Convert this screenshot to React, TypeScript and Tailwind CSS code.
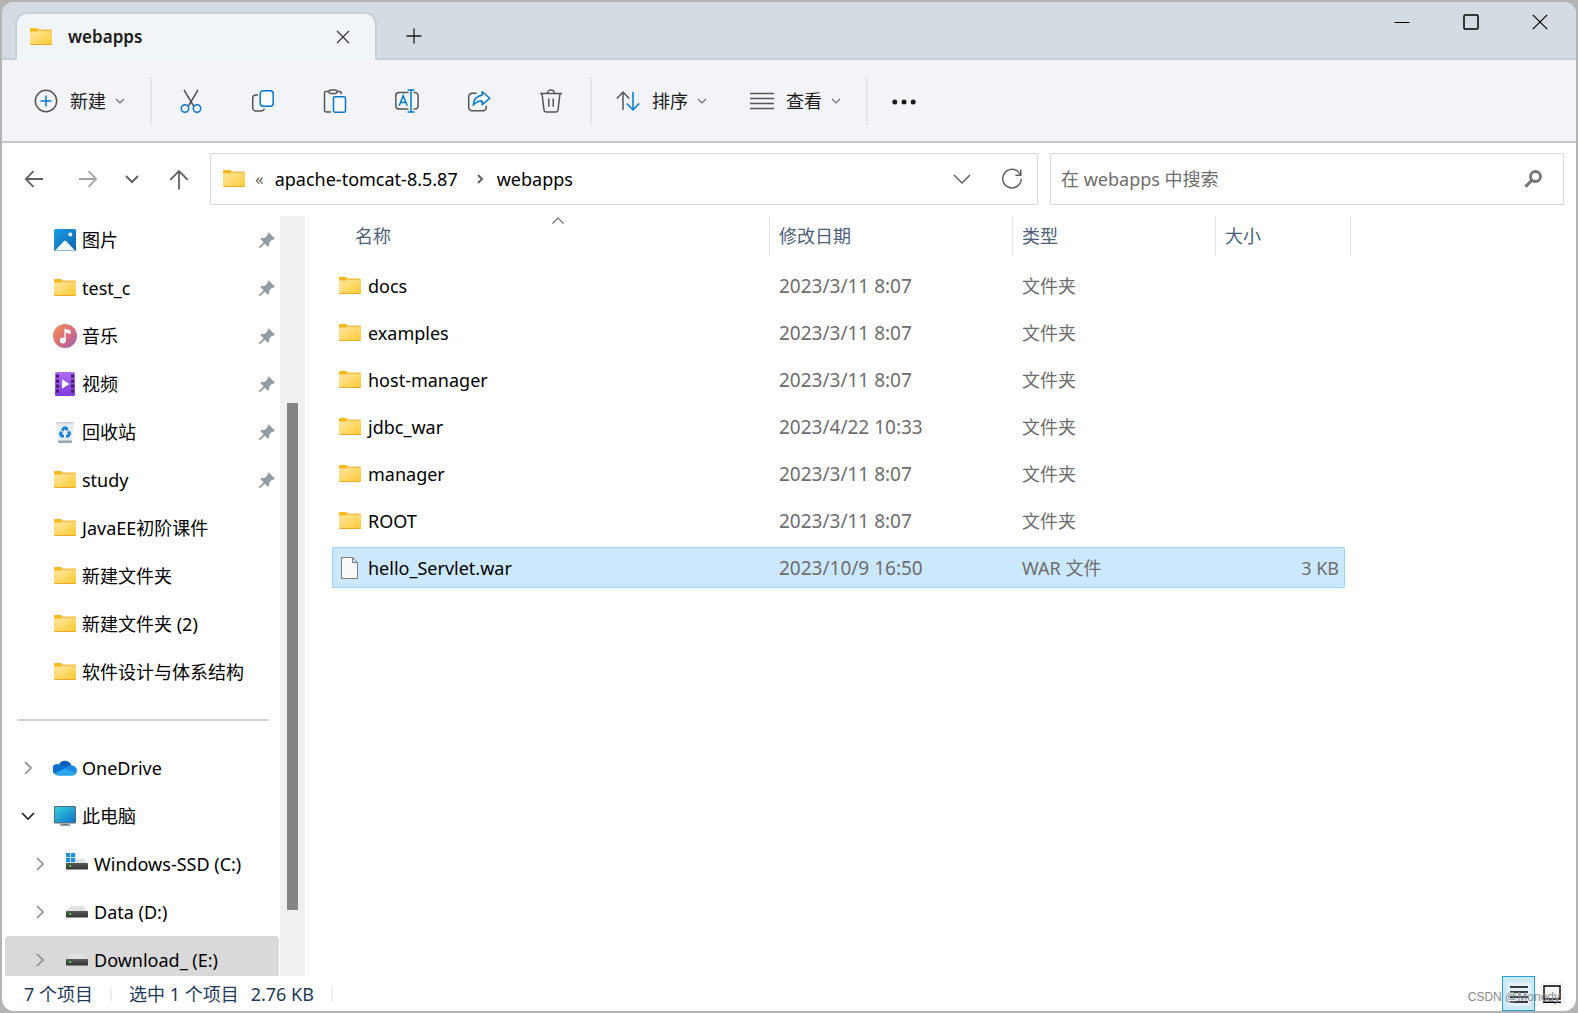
import type { ReactNode } from "react";

type IconName = "pictures" | "folder" | "music" | "video" | "recycle" | "onedrive" | "pc" | "system" | "drive" | "file";

interface SideItem {
  label: string;
  icon: IconName;
  pinned?: boolean;
  chevron?: "open" | "closed";
  nested?: boolean;
  active?: boolean;
}

const quickAccess: SideItem[] = [
  { label: "图片", icon: "pictures", pinned: true },
  { label: "test_c", icon: "folder", pinned: true },
  { label: "音乐", icon: "music", pinned: true },
  { label: "视频", icon: "video", pinned: true },
  { label: "回收站", icon: "recycle", pinned: true },
  { label: "study", icon: "folder", pinned: true },
  { label: "JavaEE初阶课件", icon: "folder" },
  { label: "新建文件夹", icon: "folder" },
  { label: "新建文件夹 (2)", icon: "folder" },
  { label: "软件设计与体系结构", icon: "folder" },
];

const locations: SideItem[] = [
  { label: "OneDrive", icon: "onedrive", chevron: "closed" },
  { label: "此电脑", icon: "pc", chevron: "open" },
  { label: "Windows-SSD (C:)", icon: "system", chevron: "closed", nested: true },
  { label: "Data (D:)", icon: "drive", chevron: "closed", nested: true },
  { label: "Download_ (E:)", icon: "drive", chevron: "closed", nested: true, active: true },
];

const files = [
  { name: "docs", date: "2023/3/11 8:07", type: "文件夹", size: "" },
  { name: "examples", date: "2023/3/11 8:07", type: "文件夹", size: "" },
  { name: "host-manager", date: "2023/3/11 8:07", type: "文件夹", size: "" },
  { name: "jdbc_war", date: "2023/4/22 10:33", type: "文件夹", size: "" },
  { name: "manager", date: "2023/3/11 8:07", type: "文件夹", size: "" },
  { name: "ROOT", date: "2023/3/11 8:07", type: "文件夹", size: "" },
  { name: "hello_Servlet.war", date: "2023/10/9 16:50", type: "WAR 文件", size: "3 KB", selected: true },
];

const shapes: Record<IconName, ReactNode> = {
  folder: (
    <>
      <path d="M1 4a1 1 0 0 1 1-1h6.2L9.7 4.5v3H1z" fill="#f9b81f" />
      <path d="M1 6.5h7.6l1.2-1.6H22a1 1 0 0 1 1 1v13a1 1 0 0 1-1 1H2a1 1 0 0 1-1-1z" fill="url(#folderBody)" />
      <path d="M9.6 5.1H22.6M1.3 19.5H22.7" stroke="#eeaa22" />
    </>
  ),
  pictures: (
    <>
      <rect x="1" y="1" width="22" height="22" rx="1.5" fill="url(#blueTile)" />
      <path d="M2 22.5 10.8 13.3a1.6 1.6 0 0 1 2.4 0L22 22.5z" fill="#f3f8fd" />
      <circle cx="17.3" cy="6.4" r="2" fill="#fff" />
    </>
  ),
  music: (
    <>
      <circle cx="12" cy="12" r="12" fill="url(#musicDisc)" />
      <circle cx="9.8" cy="16.6" r="3" fill="#fff" />
      <path d="M11.4 16.6V4.4l6.2 2.2v3.6l-4.8-1.6v8z" fill="#fff" />
    </>
  ),
  video: (
    <>
      <rect x="2" y="0" width="20" height="24" rx="1.5" fill="url(#filmBody)" />
      {[2.5, 7.5, 12.5, 17.5].map((y) => (
        <g key={y} fill="#45206f">
          <rect x="3" y={y} width="3" height="3.2" />
          <rect x="18" y={y} width="3" height="3.2" />
        </g>
      ))}
      <path d="M9 7.2v9.6l7.4-4.8z" fill="#fff" />
    </>
  ),
  recycle: (
    <>
      <path d="M3 2h18l-2.3 21H5.3z" fill="#e6ebf0" />
      <path d="M3 2h18l-.2 1.4H3.2z" fill="#c9d0d7" />
      <path d="M5.1 20.6h13.8l-.3 2.4H5.4z" fill="#9aa6b0" />
      <g fill="none" stroke="#1583d8" strokeWidth="2.8">
        <path d="M9.2 10.6 11 7.9h2l1.5 2.4" />
        <path d="m15.4 11.4 1.2 2.4-1.3 2.3H13" />
        <path d="M11 16.1H8.8l-1.4-2.3 1.2-2.2" />
      </g>
    </>
  ),
  onedrive: (
    <>
      <path d="M6 8.6a6.6 6.6 0 0 1 12.4 1.2L12 13z" fill="#0a5fb4" />
      <path d="M.6 17A5.2 5.2 0 0 1 5.6 8.2a6 6 0 0 1 4.2 1l5.6 4L2.6 18.6z" fill="#0c6fce" />
      <path d="M18.2 9.3a5.3 5.3 0 0 1 4.8 8.2L11 12.4l2.2-1.5a6 6 0 0 1 5-1.6z" fill="#1688de" />
      <path d="M1.4 17.6 12 12.4 23.4 17A4.5 4.5 0 0 1 19 19.8H5a5 5 0 0 1-3.6-2.2z" fill="#29a7ea" />
    </>
  ),
  pc: (
    <>
      <rect x="1" y="2" width="22" height="17.5" rx="1" fill="#5c6a75" />
      <rect x="2" y="3" width="20" height="15.5" fill="url(#screen)" />
      <path d="M10 19.5h4V21h-4z" fill="#8b98a1" />
      <path d="M7 20.4h10v1.2H7z" fill="#55626c" />
    </>
  ),
  system: (
    <>
      <path d="M5 6.5h13.5l4 4.8H1z" fill="#dfe1e4" />
      <rect x="1" y="11" width="22" height="6.5" rx=".6" fill="url(#driveFront)" />
      <rect x="4" y="13" width="2" height="2" fill="#33e03c" />
      <path d="M.5.5h10v10h-10z" fill="#fff" />
      <path d="M1 1h4.2v4.2H1zM6 1h4.2v4.2H6zM1 6h4.2v4.2H1zM6 6h4.2v4.2H6z" fill="#1c8fdd" />
    </>
  ),
  drive: (
    <>
      <path d="M5.5 6h13l4 5H1.5z" fill="#dfe1e4" />
      <rect x="1" y="11" width="22" height="6.5" rx=".6" fill="url(#driveFront)" />
      <rect x="4" y="13" width="2" height="2" fill="#33e03c" />
    </>
  ),
  file: <path d="M3.5 1.5h11l5 5v16h-16zM14.5 1.5v5h5" fill="#fafafa" stroke="#7b7b7b" />,
};

function ItemIcon({ name }: { name: IconName }) {
  return (
    <svg viewBox="0 0 24 24" className="size-6 shrink-0" aria-hidden="true">
      {shapes[name]}
    </svg>
  );
}

// Gradients shared by every coloured icon
function IconGradients() {
  return (
    <svg className="absolute size-0" aria-hidden="true">
      <defs>
        <linearGradient id="folderBody" x1="0" y1="0" x2="1" y2="1">
          <stop offset="0" stopColor="#ffe9a3" />
          <stop offset="1" stopColor="#ffc933" />
        </linearGradient>
        <linearGradient id="blueTile" x1="0" y1="0" x2="1" y2="1">
          <stop offset="0" stopColor="#19a0e6" />
          <stop offset="1" stopColor="#0f62b0" />
        </linearGradient>
        <linearGradient id="musicDisc" x1="0" y1="0" x2="1" y2="1">
          <stop offset=".1" stopColor="#f3895b" />
          <stop offset=".55" stopColor="#d76c7c" />
          <stop offset="1" stopColor="#9461bd" />
        </linearGradient>
        <linearGradient id="filmBody" x1="0" y1="0" x2="0" y2="1">
          <stop offset="0" stopColor="#b06cf2" />
          <stop offset="1" stopColor="#8238e0" />
        </linearGradient>
        <linearGradient id="screen" x1="0" y1="0" x2="1" y2="1">
          <stop offset="0" stopColor="#33d2df" />
          <stop offset="1" stopColor="#1173cc" />
        </linearGradient>
        <linearGradient id="driveFront" x1="0" y1="0" x2="0" y2="1">
          <stop offset="0" stopColor="#5a5a5a" />
          <stop offset="1" stopColor="#333333" />
        </linearGradient>
      </defs>
    </svg>
  );
}

interface LineIconProps {
  children: ReactNode;
  box?: string;
  className?: string;
}

function LineIcon({ children, box = "0 0 24 24", className = "size-6" }: LineIconProps) {
  return (
    <svg viewBox={box} fill="none" stroke="currentColor" strokeWidth="1.5" className={`shrink-0 ${className}`} aria-hidden="true">
      {children}
    </svg>
  );
}

function SmallChevron() {
  return (
    <LineIcon box="0 0 12 12" className="size-3 text-[#6d6d6d]">
      <path d="m2 4 4 4 4-4" strokeWidth="1.2" />
    </LineIcon>
  );
}

function Pin() {
  return (
    <svg viewBox="0 0 16 16" className="size-4 shrink-0" fill="#929ca3" aria-hidden="true">
      <path d="M9.6.4 15.6 6.2 15 7.6l-2.2.4-2.6 2.8-.2 3.2-1 .8-3.2-3.1L1.2 16H.2v-1.2l4.4-4.5L1.4 7l.8-1 3.3-.1L8.4 3.2l.4-2z" />
    </svg>
  );
}

const actions = [
  {
    label: "剪切",
    icon: (
      <>
        <path d="m5 1 9.6 16M19 1 9.4 17" stroke="#555" />
        <circle cx="6" cy="19.5" r="3.7" stroke="#0078d4" />
        <circle cx="18" cy="19.5" r="3.7" stroke="#0078d4" />
      </>
    ),
  },
  {
    label: "复制",
    icon: (
      <>
        <path d="M7 6H5a3.3 3.3 0 0 0-3.3 3.3v9.4A3.3 3.3 0 0 0 5 22h5.2a3.6 3.6 0 0 0 3.3-2.3" stroke="#555" />
        <rect x="9.2" y="1.8" width="13" height="15.4" rx="3" stroke="#0078d4" fill="#f9fbfe" />
      </>
    ),
  },
  {
    label: "粘贴",
    icon: (
      <>
        <path d="M6 2.5H3.2A1.7 1.7 0 0 0 1.5 4.2v17.1A1.7 1.7 0 0 0 3.2 23H8M14 2.5h2.5a1.7 1.7 0 0 1 1.7 1.7v1" stroke="#555" />
        <rect x="6" y="1" width="8" height="3.4" rx="1.7" stroke="#555" />
        <rect x="10.5" y="7.8" width="12" height="15.4" rx="1.4" stroke="#0078d4" fill="#f9fbfe" />
      </>
    ),
  },
  {
    label: "重命名",
    icon: (
      <>
        <path d="M13.5 3.6H4A3.3 3.3 0 0 0 .8 6.9v9.8A3.3 3.3 0 0 0 4 20h9.5M18.6 3.6h1.2a3.3 3.3 0 0 1 3.3 3.3v9.8a3.3 3.3 0 0 1-3.3 3.3h-1.2" stroke="#555" />
        <path d="m4.2 16.8 4-10.2 4 10.2M5.6 13.4h5.2M16 1v22M12.6 1h6.8M12.6 23h6.8" stroke="#0078d4" />
      </>
    ),
  },
  {
    label: "共享",
    icon: (
      <>
        <path d="M9.6 4.2H5a3.3 3.3 0 0 0-3.3 3.3v11A3.3 3.3 0 0 0 5 21.8h11a3.3 3.3 0 0 0 3.3-3.3v-1.8" stroke="#555" />
        <path d="M15.2 2.8 22.8 9.2l-7.6 6.4v-3.5c-4.2-.2-6.8 1.2-9 4.2.5-5.5 3.6-9.4 9-10z" stroke="#0078d4" strokeLinejoin="round" fill="#f9fbfe" />
      </>
    ),
  },
  {
    label: "删除",
    icon: <path d="M1 4.4h22M8.4 4.2a3.6 3.2 0 0 1 7.2 0M3 4.4l2 16.8A2 2 0 0 0 7 23h10a2 2 0 0 0 2-1.8l2-16.8M9.8 9.6v8.2M14.2 9.6v8.2" stroke="#555" />,
  },
];

function TitleBar() {
  return (
    <header className="flex h-[58px] shrink-0 border-b-2 border-[#c5cdd7] bg-[#d5dbe3]">
      <div className="z-10 mt-[10px] -mb-[2px] ml-[13px] flex w-[362px] items-center rounded-t-xl border-2 border-b-0 border-[#c8d0d8] bg-[#f2f5f7] pr-5 pl-3">
        <ItemIcon name="folder" />
        <span className="ml-[15px] flex-1 text-[17px] leading-6 font-semibold text-[#1b1b1b]">webapps</span>
        <button aria-label="关闭选项卡" className="flex size-6 items-center justify-center">
          <LineIcon box="0 0 14 14" className="size-[14px] text-[#333]">
            <path d="m1 1 12 12M13 1 1 13" strokeWidth="1.2" />
          </LineIcon>
        </button>
      </div>
      <button aria-label="新建选项卡" className="ml-[25px] flex h-full w-6 items-center justify-center pt-3 text-[#1b1b1b]">
        <LineIcon box="0 0 16 16" className="size-4">
          <path d="M8 .5v15M.5 8h15" strokeWidth="1.3" />
        </LineIcon>
      </button>
      <div className="mr-[2px] ml-auto flex h-10 text-black">
        <button aria-label="最小化" className="flex w-[69px] items-center justify-center">
          <LineIcon box="0 0 16 16" className="size-4">
            <path d="M.5 8.5h15" strokeWidth="1" />
          </LineIcon>
        </button>
        <button aria-label="最大化" className="flex w-[69px] items-center justify-center">
          <LineIcon box="0 0 16 16" className="size-4">
            <rect x="1" y="1" width="14" height="14" rx="1" />
          </LineIcon>
        </button>
        <button aria-label="关闭" className="flex w-[69px] items-center justify-center">
          <LineIcon box="0 0 16 16" className="size-4">
            <path d="m.8.8 14.4 14.4M15.2.8.8 15.2" strokeWidth="1.2" />
          </LineIcon>
        </button>
      </div>
    </header>
  );
}

function Divider() {
  return <div className="h-12 w-[2px] shrink-0 bg-[#e3e5e8]" />;
}

function Toolbar() {
  return (
    <div className="flex h-[83px] shrink-0 items-center border-b-2 border-[#c5c9ce] bg-[#f3f4f7] text-[18px] leading-6 text-[#1b1b1b]">
      <button className="mr-6 ml-8 flex items-center gap-2">
        <LineIcon>
          <circle cx="12" cy="12" r="10.7" stroke="#555" />
          <path d="M12 6.5v11M6.5 12h11" stroke="#0078d4" />
        </LineIcon>
        <span className="ml-1">新建</span>
        <SmallChevron />
      </button>
      <Divider />
      <div className="mx-[3px] flex">
        {actions.map((action) => (
          <button key={action.label} aria-label={action.label} className="flex h-12 w-[72px] items-center justify-center">
            <LineIcon>{action.icon}</LineIcon>
          </button>
        ))}
      </div>
      <Divider />
      <button className="ml-6 flex items-center gap-2">
        <LineIcon>
          <path d="M7 21V3M.8 9.4 7 3l6.2 6.4" stroke="#555" />
          <path d="M17 3v18M10.8 14.6 17 21l6.2-6.4" stroke="#0078d4" />
        </LineIcon>
        <span className="ml-1">排序</span>
        <SmallChevron />
      </button>
      <button className="mr-6 ml-[42px] flex items-center gap-2">
        <LineIcon>
          <path d="M0 4.5h24M0 9.5h24M0 14.5h24M0 19.5h24" stroke="#555" />
        </LineIcon>
        <span className="ml-1">查看</span>
        <SmallChevron />
      </button>
      <Divider />
      <button aria-label="更多" className="ml-6">
        <svg viewBox="0 0 24 24" className="size-6" fill="#1b1b1b" aria-hidden="true">
          <circle cx="2.8" cy="13" r="2.5" />
          <circle cx="12" cy="13" r="2.5" />
          <circle cx="21.2" cy="13" r="2.5" />
        </svg>
      </button>
    </div>
  );
}

function AddressRow() {
  return (
    <div className="flex shrink-0 pt-[10px] pr-3 pb-[11px] text-[18px] leading-6 text-[#616161]">
      <button aria-label="后退" className="flex w-16 items-center justify-center">
        <LineIcon>
          <path d="M21 12H4M11.5 4.2 3.8 12l7.7 7.8" strokeWidth="1.8" />
        </LineIcon>
      </button>
      <button aria-label="前进" className="flex w-11 items-center justify-center text-[#a3a3a3]">
        <LineIcon>
          <path d="M3 12h17M12.5 4.2l7.7 7.8-7.7 7.8" strokeWidth="1.8" />
        </LineIcon>
      </button>
      <button aria-label="最近位置" className="flex w-11 items-center justify-center">
        <LineIcon>
          <path d="m6 9 6 6 6-6" strokeWidth="2" />
        </LineIcon>
      </button>
      <button aria-label="上移" className="mr-1.5 flex w-[50px] items-center justify-center">
        <LineIcon>
          <path d="M12 22.5V4M3.2 12.8 12 4l8.8 8.8" strokeWidth="1.8" />
        </LineIcon>
      </button>
      <div className="flex h-[52px] flex-1 items-center border border-[#d9d9d9] bg-white pr-[13px] pl-[11px]">
        <ItemIcon name="folder" />
        <span className="ml-[9px] text-[17px]">«</span>
        <a href="#tomcat" className="ml-[11px] text-black">apache-tomcat-8.5.87</a>
        <LineIcon box="0 0 12 12" className="mr-[11px] ml-4 size-3">
          <path d="m4 2 4 4-4 4" strokeWidth="2" />
        </LineIcon>
        <a href="#webapps" className="text-black">webapps</a>
        <button aria-label="以前的位置" className="mr-[26px] ml-auto">
          <LineIcon>
            <path d="m4 8 8 8 8-8" />
          </LineIcon>
        </button>
        <button aria-label="刷新">
          <LineIcon>
            <path d="M20.6 8A9.3 9.3 0 1 0 21.3 12M20.8 2.6v5.6h-5.4" />
          </LineIcon>
        </button>
      </div>
      <div className="ml-3 flex h-[52px] w-[514px] items-center border border-[#d9d9d9] bg-white pr-[18px] pl-[10px]">
        <input
          type="text"
          aria-label="搜索"
          placeholder="在 webapps 中搜索"
          className="min-w-0 flex-1 outline-none placeholder:text-[#6d6d6d]"
        />
        <LineIcon className="size-6 text-[#757575]">
          <circle cx="14.5" cy="9.5" r="5" strokeWidth="2.8" />
          <path d="m11 13-6.4 6.6" strokeWidth="3" />
        </LineIcon>
      </div>
    </div>
  );
}

function SideRow({ item }: { item: SideItem }) {
  return (
    <li
      className={`ml-[3px] flex h-12 w-[274px] shrink-0 items-center rounded-sm pr-1 ${item.nested ? "pl-[23px]" : "pl-[11px]"} ${
        item.active ? "bg-[#d9d9d9]" : ""
      }`}
    >
      <span className="mr-[13px] flex size-6 shrink-0 items-center justify-center">
        {item.chevron && (
          <LineIcon box="0 0 16 16" className={item.chevron === "open" ? "size-4 text-[#222]" : "size-4 text-[#8a8a8a]"}>
            <path d={item.chevron === "open" ? "m2 5 6 6 6-6" : "m5 2 6 6-6 6"} strokeWidth="1.6" />
          </LineIcon>
        )}
      </span>
      <ItemIcon name={item.icon} />
      <span className="ml-[5px] flex-1 whitespace-nowrap">{item.label}</span>
      {item.pinned && <Pin />}
    </li>
  );
}

function Sidebar() {
  return (
    <aside className="flex shrink-0 overflow-hidden border-r-2 border-[#f5f5f5] text-[18px] leading-6 text-black">
      <ul className="flex w-[278px] flex-col">
        {quickAccess.map((item) => (
          <SideRow key={item.label} item={item} />
        ))}
        <li className="flex h-12 shrink-0 items-center pr-3 pl-[15px]">
          <hr className="w-full border-t-2 border-[#d2d2d2]" />
        </li>
        {locations.map((item) => (
          <SideRow key={item.label} item={item} />
        ))}
      </ul>
      <div className="mr-[2px] flex w-[25px] flex-col items-center bg-[#f0f0f0]">
        <div className="flex-[187]" />
        <div className="w-[11px] flex-[507] bg-[#858585]" />
        <div className="flex-[66]" />
      </div>
    </aside>
  );
}

function FileTable() {
  return (
    <main className="min-w-0 flex-1 overflow-hidden pl-[23px]">
      <table className="-mt-[6px] w-[1019px] table-fixed border-separate border-spacing-x-0 border-spacing-y-[6px] text-left text-[18px] leading-6">
        <colgroup>
          <col className="w-[438px]" />
          <col className="w-[243px]" />
          <col className="w-[203px]" />
          <col className="w-[129px]" />
          <col className="w-[6px]" />
        </colgroup>
        <thead className="text-[#4c607a]">
          <tr className="h-[43px] align-top">
            <th className="relative p-0 font-normal">
              <div className="flex h-10 items-center border-r border-[#e5e5e5] pl-[23px]">名称</div>
              <LineIcon box="0 0 12 12" className="absolute top-0 left-[220px] size-3 text-[#6d6d6d]">
                <path d="M.5 7.5 6 2l5.5 5.5" strokeWidth="1.2" />
              </LineIcon>
            </th>
            <th className="p-0 font-normal">
              <div className="flex h-10 items-center border-r border-[#e5e5e5] pl-[9px]">修改日期</div>
            </th>
            <th className="p-0 font-normal">
              <div className="flex h-10 items-center border-r border-[#e5e5e5] pl-[9px]">类型</div>
            </th>
            <th className="p-0 font-normal">
              <div className="flex h-10 items-center pl-[9px]">大小</div>
            </th>
            <td className="p-0">
              <div className="h-10 border-r border-[#e5e5e5]" />
            </td>
          </tr>
        </thead>
        <tbody className="text-[#6d6d6d]">
          {files.map((file) => {
            const cell = file.selected ? "border-y border-[#99d1ff] bg-[#cce8ff] p-0" : "border-y border-transparent p-0";
            return (
              <tr key={file.name} className="h-[41px]">
                <td className={`${cell} rounded-l-xs border-l`}>
                  <div className="flex items-center gap-[6px] pl-[5px] text-black">
                    <ItemIcon name={file.selected ? "file" : "folder"} />
                    {file.name}
                  </div>
                </td>
                <td className={`${cell} pl-[9px] text-[19px]`}>{file.date}</td>
                <td className={`${cell} pl-[9px]`}>{file.type}</td>
                <td className={`${cell} rounded-r-xs border-r pr-[5px] text-right`}>{file.size}</td>
              </tr>
            );
          })}
        </tbody>
      </table>
    </main>
  );
}

function StatusBar() {
  return (
    <footer className="flex h-[35px] shrink-0 items-center pl-[22px] text-[18px] leading-6 text-[#1e395b]">
      <span>7 个项目</span>
      <span className="mx-[17px] h-4 w-[2px] bg-[#f0f0f0]" />
      <span>选中 1 个项目</span>
      <span className="ml-3">2.76 KB</span>
      <span className="mx-[17px] h-4 w-[2px] bg-[#f0f0f0]" />
      <div className="relative mr-3 ml-auto flex items-center">
        <button aria-label="详细信息" className="flex h-[35px] w-[33px] items-center justify-center border border-[#26a0da] bg-[#cbe8f6]">
          <span className="flex size-6 items-center justify-center rounded bg-[#e4f1f8] text-black">
            <LineIcon box="0 0 18 18" className="size-[18px]">
              <path d="M0 2h18M0 7h18M0 12h18M0 17h18" strokeWidth="1.4" />
            </LineIcon>
          </span>
        </button>
        <button aria-label="大缩略图" className="ml-[5px] flex size-6 items-center justify-center rounded bg-[#f6f6f6] text-black">
          <LineIcon box="0 0 18 18" className="size-[18px]">
            <path d="M1 1h16v13H1zM0 17.2h18" strokeWidth="1.4" />
          </LineIcon>
        </button>
        <span className="pointer-events-none absolute right-1 bottom-1.5 font-['Liberation_Sans'] text-[12px] leading-4 whitespace-nowrap text-[#8c8c8c]">
          CSDN @Monody
        </span>
      </div>
    </footer>
  );
}

export default function App() {
  return (
    <div className="h-screen bg-[#b4b4b4] p-[2px] font-['Noto_Sans','Noto_Sans_CJK_SC',sans-serif]">
      <IconGradients />
      <div className="flex h-full flex-col overflow-hidden rounded-xl bg-white">
        <TitleBar />
        <Toolbar />
        <AddressRow />
        <div className="flex min-h-0 flex-1">
          <Sidebar />
          <FileTable />
        </div>
        <StatusBar />
      </div>
    </div>
  );
}
